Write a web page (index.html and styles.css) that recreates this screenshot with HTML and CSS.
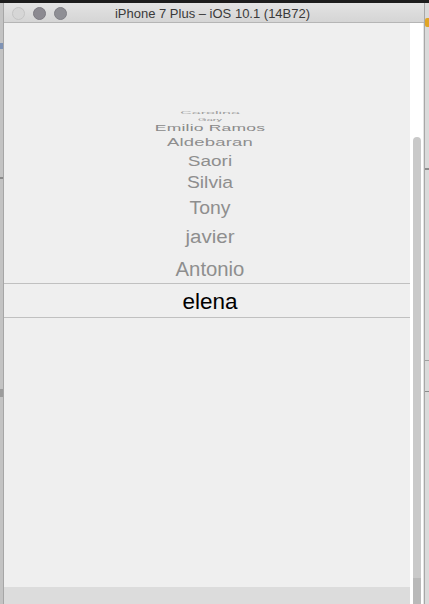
FILE: index.html
```html
<!DOCTYPE html>
<html>
<head>
<meta charset="utf-8">
<link rel="stylesheet" href="styles.css">
</head>
<body>
<div class="topline"></div>
<div class="main">
  <div class="leftstrip">
    <div class="lmark m1"></div>
    <div class="lmark m2"></div>
    <div class="lmark m3"></div>
  </div>
  <div class="window">
    <div class="titlebar">
      <div class="lights">
        <span class="light close"></span>
        <span class="light mini"></span>
        <span class="light zoom"></span>
      </div>
      <div class="title">iPhone 7 Plus – iOS 10.1 (14B72)</div>
      <div></div>
    </div>
    <div class="content">
      <div class="screen">
        <div class="spacer"></div>
        <div class="row r0"><span>Carolina</span></div>
        <div class="row r1"><span>Gary</span></div>
        <div class="row r2"><span>Emilio Ramos</span></div>
        <div class="row r3"><span>Aldebaran</span></div>
        <div class="row r4"><span>Saori</span></div>
        <div class="row r5"><span>Silvia</span></div>
        <div class="row r6"><span>Tony</span></div>
        <div class="row r7"><span>javier</span></div>
        <div class="row r8"><span>Antonio</span></div>
        <div class="row selected"><span>elena</span></div>
        <div class="fill"></div>
        <div class="bottomband"></div>
      </div>
      <div class="gutter">
        <div class="scrollbar"><div class="scrollend"></div></div>
      </div>
    </div>
  </div>
  <div class="rightstrip">
    <div class="yellow"></div>
    <div class="rline a"></div>
    <div class="rline b"></div>
    <div class="rline c"></div>
  </div>
</div>
</body>
</html>
```
FILE: styles.css
```css
html, body {
  margin: 0;
  padding: 0;
}
body {
  width: 429px;
  height: 604px;
  overflow: hidden;
  background: #e4e4e4;
  font-family: "Liberation Sans", Arial, sans-serif;
  display: flex;
  flex-direction: column;
}
.topline {
  height: 3px;
  background: #1c1c1c;
  flex: none;
}
.main {
  flex: 1;
  display: flex;
  min-height: 0;
}
.leftstrip {
  width: 3px;
  background: #c3c3c3;
  display: flex;
  flex-direction: column;
}
.lmark {
  height: 2px;
  background: #8a8a8a;
}
.m1 { margin-top: 40px; height: 6px; background: #7f93b5; }
.m2 { margin-top: 128px; }
.m3 { margin-top: 210px; height: 8px; background: #9c9c9c; }
.window {
  width: 420px;
  border-left: 1px solid #a6a6a6;
  border-right: 1px solid #a8a8a8;
  display: flex;
  flex-direction: column;
}
.titlebar {
  height: 19px;
  border-bottom: 1px solid #b5b5b5;
  background: linear-gradient(#e3e3e3, #d5d5d5);
  display: grid;
  grid-template-columns: 1fr auto 1fr;
  align-items: center;
}
.lights {
  display: flex;
  gap: 8px;
  padding-left: 8px;
  padding-top: 1px;
}
.light {
  width: 11px;
  height: 11px;
  border-radius: 50%;
  display: block;
}
.close {
  background: #d6d6d6;
  border: 0.5px solid #c4c4c4;
}
.mini {
  background: #8c8a91;
  border: 0.5px solid #7d7b82;
}
.zoom {
  background: #8f8f95;
  border: 0.5px solid #808086;
}
.title {
  font-size: 13px;
  color: #3a3a3a;
  padding-top: 2px;
  margin-right: 3px;
  white-space: nowrap;
}
.content {
  flex: 1;
  display: flex;
  min-height: 0;
}
.screen {
  width: 406px;
  background: #efefef;
  display: flex;
  flex-direction: column;
}
.spacer {
  height: 86px;
  flex: none;
}
.row {
  flex: none;
  display: flex;
  justify-content: center;
  align-items: center;
  padding-left: 6px;
  color: #8e8e8e;
  overflow: visible;
}
.row span {
  display: inline-block;
  line-height: 1;
  white-space: nowrap;
}
.r0 { height: 7px; }
.r0 span { font-size: 16px; transform: scaleY(0.18); color: #a0a0a0; }
.r1 { height: 7px; }
.r1 span { font-size: 11px; transform: scaleY(0.4); color: #959595; }
.r2 { height: 12px; }
.r2 span { font-size: 17.5px; letter-spacing: 0.2px; transform: scaleY(0.5); color: #8a8a8a; }
.r3 { height: 15px; }
.r3 span { font-size: 18.5px; letter-spacing: 0.2px; transform: scaleY(0.6); }
.r4 { height: 21px; }
.r4 span { font-size: 19px; transform: scaleY(0.78); }
.r5 { height: 23px; }
.r5 span { font-size: 19.3px; transform: scaleY(0.82); }
.r6 { height: 28px; }
.r6 span { font-size: 19.4px; transform: scaleY(0.95); }
.r7 { height: 30px; }
.r7 span { font-size: 20.5px; transform: scaleY(0.92); padding-top: 1px; }
.r8 { height: 31px; border-bottom: 1px solid #c0c0c0; }
.r8 span { font-size: 20.3px; padding-top: 3px; }
.selected {
  height: 33px;
  border-bottom: 1px solid #c0c0c0;
  color: #000;
}
.selected span { font-size: 22.5px; padding-top: 3px; }
.fill { flex: 1; }
.bottomband {
  height: 17px;
  background: #dcdcdc;
  flex: none;
}
.gutter {
  width: 13px;
  background: #ffffff;
  display: flex;
  flex-direction: column;
  padding-top: 114px;
  align-items: flex-start;
}
.scrollbar {
  margin-left: 3px;
  width: 8px;
  flex: 1;
  background: #c9c9c9;
  border-radius: 4px 4px 0 0;
  display: flex;
  flex-direction: column;
  justify-content: flex-end;
}
.scrollend {
  height: 26px;
  background: #b9b9b9;
}
.rightstrip {
  width: 4px;
  background: #dadada;
  display: flex;
  flex-direction: column;
}
.yellow {
  margin-top: 15px;
  height: 9px;
  width: 4px;
  background: #e0a526;
  border-radius: 2px 0 0 2px;
}
.rline {
  height: 1px;
  background: #8c8c8c;
}
.rline.a { margin-top: 141px; height: 2px; }
.rline.b { margin-top: 190px; background: #a0a0a0; }
.rline.c { margin-top: 30px; }
```
